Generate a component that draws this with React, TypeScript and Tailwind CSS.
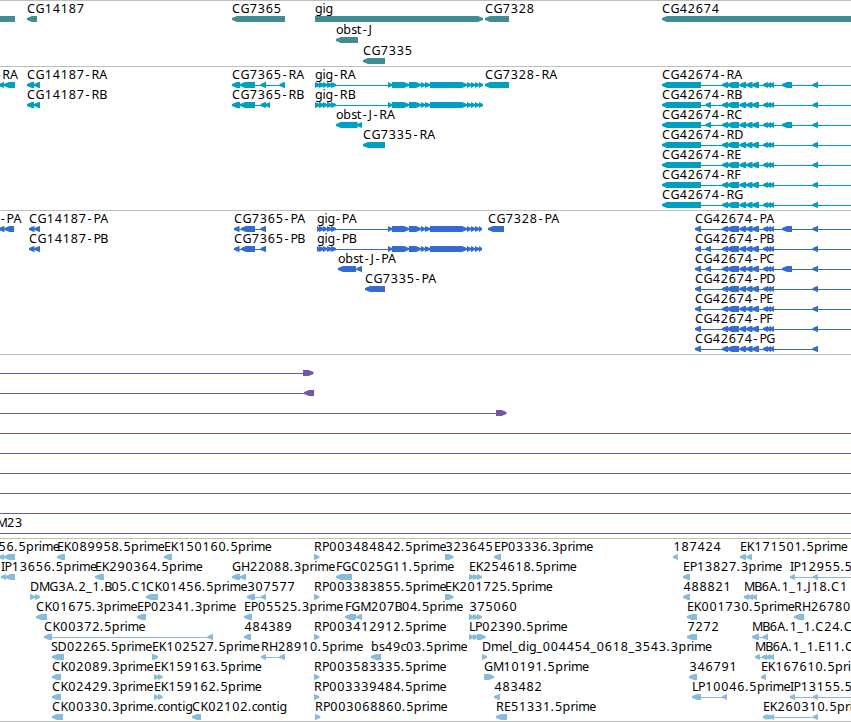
type Block = [number, number];

interface Feature {
  label?: string;
  x?: number;
  dir?: "L" | "R";
  blocks?: Block[];
  line?: Block;
}

interface Track {
  name: string;
  color: string;
  height: string;
  rowHeight: string;
  rows: Feature[][];
}

// Pixel advance of every character used in the labels
const ADVANCE: Record<string, number> = {
  A: 8, B: 7, C: 8.5, D: 9, E: 6.7, F: 6.3, G: 8.9, H: 8.7, I: 3.5, J: 3.7, K: 7.3,
  L: 6, M: 10.3, P: 6.9, R: 7.9, S: 6.5,
  b: 8, c: 5.2, d: 8, e: 7, g: 7.4, i: 3, l: 3, m: 11, n: 7.6, o: 7.2, p: 8, r: 4.7, s: 5.5, t: 4.8,
  "-": 7, ".": 4, _: 6,
};

const charPositions = (text: string, start: number) => {
  let x = start;
  return text
    .split("")
    .map((ch) => {
      // short glyphs sit in the middle of their cell
      const pos = ch === "-" ? x + 1.2 : /\d/.test(ch) ? x + 0.4 : x;
      x += ADVANCE[ch] ?? 8;
      return pos.toFixed(1);
    })
    .join(" ");
};

const f = (
  label: string,
  x: number,
  dir: "L" | "R",
  blocks: Block[],
  line?: Block
): Feature => ({ label, x, dir, blocks, line });

// Exon models shared between transcripts and proteins
const gigTail: Block[] = [
  [388, 392], [392, 409], [409, 421], [421, 425], [425, 430],
  [430, 467], [467, 471], [471, 475], [475, 479],
];
const gigRna: Block[] = [[315, 320], [319, 324], [323, 327], [327, 332], [331, 336], ...gigTail, [479, 483]];
const gigProtein: Block[] = [[317, 320], [319, 324], [323, 327], [327, 332], [331, 336], ...gigTail, [479, 482]];

const cgMiddle: Block[] = [
  [722, 728], [727, 739], [739.5, 746], [746, 752.5], [752, 759],
  [763, 768], [767, 771], [770, 774],
];
const cgLast: Block = [812.5, 818];
const cgSmall: Block = [705.5, 711];
const cgLarge: Block = [782, 792];

const cgRna = (letter: string, extra: Block[]) =>
  f(`CG42674-R${letter}`, 662, "L", [[662, 701], ...extra, ...cgMiddle, cgLast], [662, 860]);
const cgProtein = (letter: string, extra: Block[], end = 860) =>
  f(`CG42674-P${letter}`, 695, "L", [[695, 701], ...extra, ...cgMiddle, cgLast], [695, end]);

const rp = (id: string, x = 314) => f(`RP${id}.5prime`, x, "R", [[x, x + 5.3]]);

const tracks: Track[] = [
  {
    name: "genes",
    color: "#408e94",
    height: "h-[66px]",
    rowHeight: "h-[21px]",
    rows: [
      [
        { dir: "L", blocks: [[-20, 15]] },
        f("CG14187", 27, "L", [[27, 37]]),
        f("CG7365", 232, "L", [[232, 285]]),
        f("gig", 315, "R", [[315, 483]]),
        f("CG7328", 485, "L", [[485, 509]]),
        f("CG42674", 662, "L", [[662, 870]]),
      ],
      [f("obst-J", 336, "L", [[336, 358]])],
      [f("CG7335", 363, "L", [[363, 385]])],
    ],
  },
  {
    name: "transcripts",
    color: "#009fc1",
    height: "h-36",
    rowHeight: "h-5",
    rows: [
      [
        f("-RA", -4.8, "L", [[-1, 4], [4, 15]]),
        f("CG14187-RA", 27, "L", [[27, 34], [34, 40]]),
        f("CG7365-RA", 232, "L", [[232, 240], [240, 255], [260.5, 266], [279.5, 285]]),
        f("gig-RA", 315, "R", gigRna),
        f("CG7328-RA", 485, "L", [[485, 509]]),
        cgRna("A", [cgLarge]),
      ],
      [
        f("CG14187-RB", 27, "L", [[27, 34], [34, 40]]),
        f("CG7365-RB", 232, "L", [[232, 240], [240, 255], [260.5, 266], [265.5, 270]]),
        f("gig-RB", 315, "R", gigRna),
        cgRna("B", [cgSmall]),
      ],
      [f("obst-J-RA", 336, "L", [[336, 357.5], [357, 362]]), cgRna("C", [cgSmall, cgLarge])],
      [f("CG7335-RA", 363, "L", [[363, 385]]), cgRna("D", [])],
      [cgRna("E", [])],
      [cgRna("F", [])],
      [cgRna("G", [])],
    ],
  },
  {
    name: "proteins",
    color: "#326cce",
    height: "h-36",
    rowHeight: "h-5",
    rows: [
      [
        f("-PA", -0.5, "L", [[-1, 4.5], [4.5, 14]]),
        f("CG14187-PA", 29, "L", [[29, 34.5], [34.5, 40]]),
        f("CG7365-PA", 234, "L", [[234, 239.5], [241, 255], [260.5, 266]]),
        f("gig-PA", 317, "R", gigProtein),
        f("CG7328-PA", 488, "L", [[488, 504]]),
        cgProtein("A", [cgLarge]),
      ],
      [
        f("CG14187-PB", 29, "L", [[29, 34.5], [34.5, 40]]),
        f("CG7365-PB", 234, "L", [[234, 239.5], [241, 255], [260.5, 266]]),
        f("gig-PB", 317, "R", gigProtein),
        cgProtein("B", [cgSmall]),
      ],
      [f("obst-J-PA", 338, "L", [[338, 356], [356.5, 362]]), cgProtein("C", [cgSmall, cgLarge])],
      [f("CG7335-PA", 365, "L", [[365, 385]]), cgProtein("D", [])],
      [cgProtein("E", [])],
      [cgProtein("F", [])],
      [cgProtein("G", [], 818)],
    ],
  },
  {
    name: "insertions",
    color: "#7357a6",
    height: "h-[184px]",
    rowHeight: "h-5",
    rows: [
      [{ dir: "R", blocks: [[303, 313.5]], line: [-5, 305] }],
      [{ dir: "L", blocks: [[304, 314]], line: [-5, 306] }],
      [{ dir: "R", blocks: [[496, 506.5]], line: [-5, 498] }],
      [{ line: [-5, 860] }],
      [{ line: [-5, 860] }],
      [{ line: [-5, 860] }],
      [{ line: [-5, 860] }],
      [{ line: [-5, 860] }],
      [{ label: "M23", x: -3.6, line: [-5, 860] }],
    ],
  },
  {
    name: "ests",
    color: "#87bbdc",
    height: "h-[183px]",
    rowHeight: "h-5",
    rows: [
      [
        f("56.5prime", -2, "L", [[-1, 4], [4, 15]]),
        f("EK089958.5prime", 57, "L", [[57, 65]]),
        f("EK150160.5prime", 164, "L", [[164, 172]]),
        rp("003484842"),
        f("323645", 445, "R", [[445, 453.5]]),
        f("EP03336.3prime", 494, "L", [[494, 501]]),
        f("187424", 673, "L", [[673, 678]]),
        f("EK171501.5prime", 740, "L", [[740, 746], [746.5, 752]]),
      ],
      [
        f("IP13656.5prime", 1, "L", [[1, 6], [5.5, 15]]),
        f("EK290364.5prime", 95, "L", [[95, 104]]),
        f("GH22088.3prime", 232, "L", [[232, 240], [240, 246]]),
        f("FGC025G11.5prime", 336, "L", [[336, 352]]),
        f("EK254618.5prime", 469, "R", [[469, 474], [473, 478], [477, 482]]),
        f("EP13827.3prime", 683, "L", [[683, 690]]),
        f("IP12955.5prime", 790, "L", [[790, 795], [813, 818]], [790, 860]),
      ],
      [
        f("DMG3A.2_1.B05.C1", 30, "R", [[30, 35], [35, 40]]),
        f("CK01456.5prime", 146, "L", [[146, 158]]),
        f("307577", 247, "L", [[247, 255], [261, 266]]),
        rp("003383855"),
        f("EK201725.5prime", 445, "R", [[445, 453.5]]),
        f("488821", 683, "L", [[683, 690]]),
        f("MB6A.1_1.J18.C1", 744, "L", [[744, 749], [748, 753], [752, 757]]),
      ],
      [
        f("CK01675.3prime", 36, "L", [[36, 47]]),
        f("EP02341.3prime", 137, "L", [[137, 146]]),
        f("EP05525.3prime", 244, "L", [[244, 252]]),
        f("FGM207B04.5prime", 345, "L", [[345, 356], [356.5, 362]]),
        f("375060", 469, "R", [[469, 474], [473, 478], [477, 482]]),
        f("EK001730.5prime", 687, "L", [[687, 697]]),
        f("RH26780.5prime", 794, "L", [[794, 804]]),
      ],
      [
        f("CK00372.5prime", 44, "L", [[44, 52], [207.5, 213]]),
        f("484389", 244, "L", [[244, 251]]),
        rp("003412912"),
        f("LP02390.5prime", 469, "R", [[469, 474], [473, 478], [477, 485.5]]),
        f("7272", 687, "L", [[687, 697]]),
        f("MB6A.1_1.C24.C1", 752, "L", [[752, 759], [762.5, 768]]),
      ],
      [
        f("SD02265.5prime", 51, "L", [[52, 64]]),
        f("EK102527.5prime", 152, "R", [[152, 158]]),
        f("RH28910.5prime", 261, "L", [[261, 266], [279.5, 285]]),
        f("bs49c03.5prime", 371, "L", [[371, 381]]),
        f("Dmel_dig_004454_0618_3543.3prime", 482, "R", [[482, 487]]),
        f("MB6A.1_1.E11.C1", 755, "L", [[755, 760], [762, 767], [766, 770.5], [770, 774]]),
      ],
      [
        f("CK02089.3prime", 52, "L", [[52, 61]]),
        f("EK159163.5prime", 154, "R", [[154, 158.5], [158, 162.5]]),
        rp("003583335"),
        f("GM10191.5prime", 484, "R", [[484, 494]]),
        f("346791", 689, "L", [[689, 697]]),
        f("EK167610.5prime", 761, "L", [[761, 766]]),
      ],
      [
        f("CK02429.3prime", 52, "L", [[52, 61]]),
        f("EK159162.5prime", 154, "R", [[154, 158.5], [158, 162.5]]),
        rp("003339484"),
        f("483482", 494, "L", [[494, 500]]),
        f("LP10046.5prime", 692, "L", [[692, 701], [722, 727]]),
        f("IP13155.5prime", 790, "L", [[790, 795], [813, 818]], [790, 860]),
      ],
      [
        f("CK00330.3prime.contig", 52, "L", [[52, 63]]),
        f("CK02102.contig", 192, "L", [[192, 201]]),
        rp("003068860", 315),
        f("RE51331.5prime", 496, "L", [[496, 507]]),
        f("EK260310.5prime", 763, "L", [[763, 767.5], [766.5, 770.5], [770, 774], [813, 818]]),
      ],
    ],
  },
];

// Exon box with a blunt arrow head on its leading end
const arrowPoints = ([s, e]: Block, dir: "L" | "R") => {
  const head = Math.min(e - s, 5);
  return dir === "L"
    ? `${s},17 ${s},19 ${s + head},21 ${e},21 ${e},15 ${s + head},15`
    : `${e},17 ${e},19 ${e - head},21 ${s},21 ${s},15 ${e - head},15`;
};

function FeatureGlyph({ feature, color }: { feature: Feature; color: string }) {
  const { label, x = 0, dir = "L", blocks = [], line } = feature;
  const span = line ?? (blocks.length > 1 ? [blocks[0][0], blocks[blocks.length - 1][1]] : null);

  return (
    <g>
      {span && <rect x={span[0]} y={18} width={span[1] - span[0]} height={1} fill={color} />}
      {blocks.map((block, i) => (
        <polygon key={i} points={arrowPoints(block, dir)} fill={color} />
      ))}
      {label && (
        <text x={charPositions(label, x)} y={12} fill="#000">
          {label}
        </text>
      )}
    </g>
  );
}

export default function App() {
  return (
    <main className="flex h-[722px] w-[851px] flex-col overflow-hidden border-b border-[#bebebe] bg-white font-['Noto_Sans','Open_Sans',sans-serif] text-[12.5px]">
      {tracks.map((track) => (
        <section key={track.name} className={`${track.height} shrink-0 border-t border-[#bebebe]`}>
          {track.rows.map((row, i) => (
            <svg key={i} className={`block w-full overflow-visible ${track.rowHeight}`}>
              {row.map((feature, j) => (
                <FeatureGlyph key={j} feature={feature} color={track.color} />
              ))}
            </svg>
          ))}
        </section>
      ))}
    </main>
  );
}
